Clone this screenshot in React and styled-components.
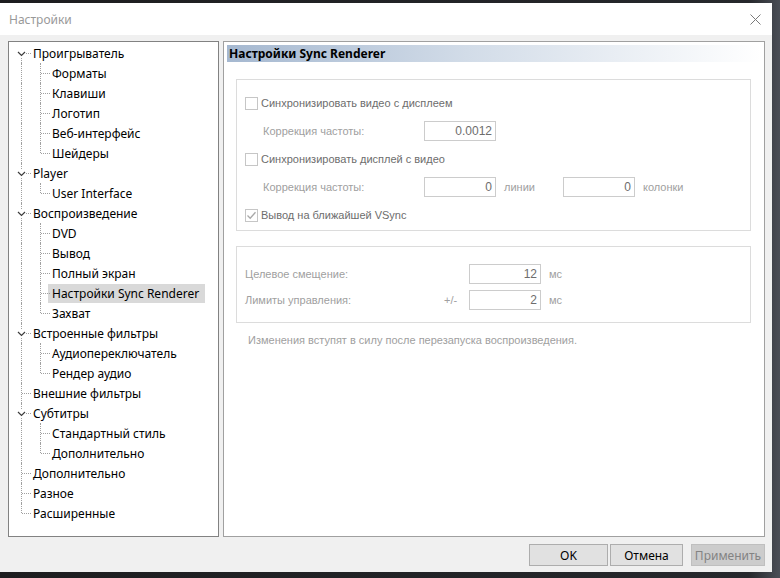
import React from 'react';
import styled, { createGlobalStyle } from 'styled-components';

const GlobalStyle = createGlobalStyle`
  html, body {
    margin: 0;
    padding: 0;
    background: #26282c;
  }
  body {
    width: 780px;
    height: 578px;
    overflow: hidden;
  }
`;

const Desktop = styled.div`
  width: 780px;
  height: 578px;
  padding-top: 3px;
  box-sizing: border-box;
  background: linear-gradient(90deg, #1d1d1f 0%, #26282c 96%, #4a4e56 100%);
`;

const Window = styled.div`
  width: 772px;
  height: 569px;
  display: flex;
  flex-direction: column;
  background: #f0f0f0;
  font-family: "Noto Sans", "Open Sans", sans-serif;
`;

const TitleBar = styled.div`
  height: 32px;
  flex: none;
  display: flex;
  align-items: center;
  justify-content: space-between;
  background: #ffffff;
  padding: 0 11px 0 9px;
`;

const Title = styled.span`
  font-size: 12px;
  color: #999999;
`;

const Body = styled.div`
  flex: 1;
  display: flex;
  flex-direction: column;
  padding: 6px 7px 7px 8px;
`;

const Panels = styled.div`
  display: flex;
  gap: 4px;
  height: 496px;
`;

const TreePanel = styled.div`
  width: 211px;
  box-sizing: border-box;
  border: 1px solid #828282;
  background: #ffffff;
  padding: 1px 0 0 1px;
`;

const TreeRow = styled.div`
  display: flex;
  height: 20px;
  align-items: center;
`;

const Cell = styled.div`
  position: relative;
  width: 19px;
  height: 20px;
  flex: none;

  &::before {
    content: '';
    position: absolute;
    left: 11px;
    top: ${p => (p.$kind === 'top' || p.$kind === 'blank' ? '10px' : '0')};
    bottom: ${p => (p.$kind === 'corner' ? '10px' : '0')};
    border-left: 1px dotted #a0a0a0;
    display: ${p => (p.$kind === 'blank' ? 'none' : 'block')};
  }

  &::after {
    content: '';
    position: absolute;
    left: 12px;
    top: 10px;
    width: 9px;
    border-top: 1px dotted #a0a0a0;
    display: ${p => (p.$kind === 'pipe' || p.$kind === 'blank' ? 'none' : 'block')};
  }

  svg {
    position: absolute;
    left: 7px;
    top: 6px;
    z-index: 1;
  }
`;

const NodeLabel = styled.span`
  height: 19px;
  line-height: 19px;
  padding: 0 6px 0 4px;
  font-size: 12px;
  color: #000000;
  white-space: nowrap;
  background: ${p => (p.$selected ? '#d9d9d9' : 'transparent')};
`;

const ContentPanel = styled.div`
  flex: 1;
  box-sizing: border-box;
  border: 1px solid #a0a0a0;
  background: #ffffff;
  padding: 3px 13px 0 3px;
  display: flex;
  flex-direction: column;
  font-family: "Liberation Sans", Arial, sans-serif;
  font-size: 11px;
`;

const PageHeader = styled.div`
  height: 17px;
  margin-right: -10px;
  padding-left: 2px;
  line-height: 17px;
  font-family: "Noto Sans", "Open Sans", sans-serif;
  font-size: 12px;
  font-weight: 700;
  color: #000000;
  background: linear-gradient(90deg, #a5b8d0 0%, #d2dce8 45%, #ffffff 100%);
`;

const GroupBox = styled.div`
  margin: ${p => p.$top}px 0 0 9px;
  border: 1px solid #dcdcdc;
  padding: ${p => p.$pad};
  display: flex;
  flex-direction: column;
  gap: ${p => p.$gap}px;
`;

const Row = styled.div`
  display: flex;
  align-items: center;
  height: 20px;
  padding-left: ${p => p.$indent || 0}px;
`;

const CheckRow = styled.label`
  display: flex;
  align-items: center;
  height: 20px;
  color: #6d6d6d;
`;

const Box = styled.span`
  width: 11px;
  height: 11px;
  border: 1px solid #c6c6c6;
  background: #ffffff;
  margin-right: 3px;
  display: flex;
  align-items: center;
  justify-content: center;
`;

const Label = styled.span`
  width: ${p => p.$w}px;
  flex: none;
  color: #a0a0a0;
  white-space: nowrap;
`;

const Field = styled.div`
  width: 72px;
  height: 20px;
  box-sizing: border-box;
  border: 1px solid #cccccc;
  background: #ffffff;
  padding-right: 3px;
  display: flex;
  align-items: center;
  justify-content: flex-end;
  color: #6d6d6d;
  font-size: 12px;
  flex: none;
`;

const Unit = styled.span`
  width: ${p => p.$w || 'auto'};
  margin-left: 8px;
  color: #a0a0a0;
  flex: none;
`;

const Note = styled.div`
  margin: 11px 0 0 21px;
  color: #a0a0a0;
`;

const ButtonRow = styled.div`
  display: flex;
  justify-content: flex-end;
  margin-top: 7px;
`;

const Button = styled.button`
  width: ${p => p.$w}px;
  height: 22px;
  margin-left: ${p => p.$gapLeft || 0}px;
  border: 1px solid ${p => (p.$disabled ? '#bfbfbf' : '#adadad')};
  background: ${p => (p.$disabled ? '#cccccc' : '#e1e1e1')};
  color: ${p => (p.$disabled ? '#838383' : '#000000')};
  font-family: "Noto Sans", "Open Sans", sans-serif;
  font-size: 12px;
  padding: 0;
`;

const tree = [
  { label: 'Проигрыватель', children: ['Форматы', 'Клавиши', 'Логотип', 'Веб-интерфейс', 'Шейдеры'] },
  { label: 'Player', children: ['User Interface'] },
  { label: 'Воспроизведение', children: ['DVD', 'Вывод', 'Полный экран', 'Настройки Sync Renderer', 'Захват'] },
  { label: 'Встроенные фильтры', children: ['Аудиопереключатель', 'Рендер аудио'] },
  { label: 'Внешние фильтры' },
  { label: 'Субтитры', children: ['Стандартный стиль', 'Дополнительно'] },
  { label: 'Дополнительно' },
  { label: 'Разное' },
  { label: 'Расширенные' },
];

const selected = 'Настройки Sync Renderer';

const Chevron = () => (
  <svg width="9" height="9" viewBox="0 0 9 9">
    <rect width="9" height="9" fill="#ffffff" />
    <polyline points="1,3 4.5,6.5 8,3" fill="none" stroke="#3c3c3c" strokeWidth="1.2" />
  </svg>
);

const Close = () => (
  <svg width="11" height="11" viewBox="0 0 11 11">
    <path d="M0.5 0.5 L10.5 10.5 M10.5 0.5 L0.5 10.5" stroke="#7a7a7a" strokeWidth="1" />
  </svg>
);

const Tick = () => (
  <svg width="9" height="9" viewBox="0 0 9 9">
    <polyline points="0.5,4.5 3.2,7.2 8.5,1.2" fill="none" stroke="#a8a8a8" strokeWidth="1.3" />
  </svg>
);

const Tree = () => {
  const rows = [];
  tree.forEach((node, i) => {
    const last = i === tree.length - 1;
    const kind = i === 0 ? 'top' : last ? 'corner' : 'tee';
    rows.push(
      <TreeRow key={node.label + i}>
        <Cell $kind={kind}>{node.children && <Chevron />}</Cell>
        <NodeLabel>{node.label}</NodeLabel>
      </TreeRow>
    );
    (node.children || []).forEach((child, j) => {
      const lastChild = j === node.children.length - 1;
      rows.push(
        <TreeRow key={node.label + child}>
          <Cell $kind={last ? 'blank' : 'pipe'} />
          <Cell $kind={lastChild ? 'corner' : 'tee'} />
          <NodeLabel $selected={child === selected}>{child}</NodeLabel>
        </TreeRow>
      );
    });
  });
  return <TreePanel>{rows}</TreePanel>;
};

const Check = ({ checked, children }) => (
  <CheckRow>
    <Box>{checked && <Tick />}</Box>
    {children}
  </CheckRow>
);

export default function App() {
  return (
    <Desktop>
      <GlobalStyle />
      <Window>
        <TitleBar>
          <Title>Настройки</Title>
          <Close />
        </TitleBar>
        <Body>
          <Panels>
            <Tree />
            <ContentPanel>
              <PageHeader>Настройки Sync Renderer</PageHeader>
              <GroupBox $top={17} $pad="13px 8px 5px 8px" $gap={8}>
                <Check>Синхронизировать видео с дисплеем</Check>
                <Row $indent={18}>
                  <Label $w={161}>Коррекция частоты:</Label>
                  <Field>0.0012</Field>
                </Row>
                <Check>Синхронизировать дисплей с видео</Check>
                <Row $indent={18}>
                  <Label $w={161}>Коррекция частоты:</Label>
                  <Field>0</Field>
                  <Unit $w="59px">линии</Unit>
                  <Field>0</Field>
                  <Unit>колонки</Unit>
                </Row>
                <Check checked>Вывод на ближайшей VSync</Check>
              </GroupBox>
              <GroupBox $top={15} $pad="17px 8px 12px 8px" $gap={6}>
                <Row>
                  <Label $w={224}>Целевое смещение:</Label>
                  <Field>12</Field>
                  <Unit>мс</Unit>
                </Row>
                <Row>
                  <Label $w={199}>Лимиты управления:</Label>
                  <Label $w={25}>+/-</Label>
                  <Field>2</Field>
                  <Unit>мс</Unit>
                </Row>
              </GroupBox>
              <Note>Изменения вступят в силу после перезапуска воспроизведения.</Note>
            </ContentPanel>
          </Panels>
          <ButtonRow>
            <Button $w={79}>OK</Button>
            <Button $w={73} $gapLeft={2}>Отмена</Button>
            <Button $w={74} $gapLeft={8} $disabled disabled>Применить</Button>
          </ButtonRow>
        </Body>
      </Window>
    </Desktop>
  );
}
